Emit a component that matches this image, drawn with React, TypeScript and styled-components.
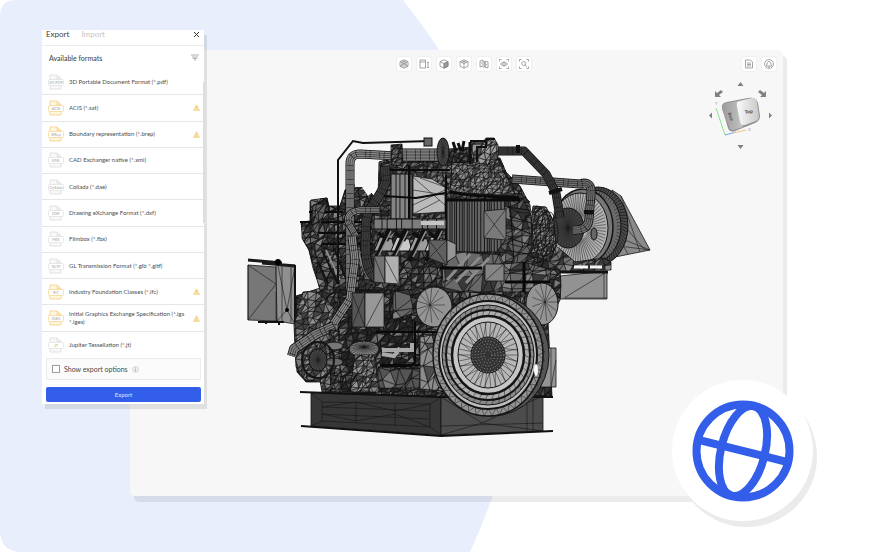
import React from "react";
import styled, { createGlobalStyle } from "styled-components";

const Global = createGlobalStyle`
  *, *::before, *::after { box-sizing: border-box; }
  body { margin: 0; background: #fff; font-family: Lato, "Noto Sans", sans-serif; color: #4a4a4a; }
  button, input { font: inherit; color: inherit; margin: 0; }
`;

/* ---------- layout ---------- */

const Page = styled.main`
  position: relative;
  display: flex;
  min-height: 100vh;
  padding: 50px 87px 56px 130px;
  overflow: hidden;
`;

const Backdrop = styled.svg`
  position: absolute;
  inset: 0 auto 0 0;
  height: 100%;
`;

const Viewer = styled.section`
  position: relative;
  flex: 1;
  display: flex;
  flex-direction: column;
  min-width: 0;
  background: #f7f7f7;
  border-radius: 5px;
  box-shadow: 4px 6px 0 rgba(0, 0, 0, 0.08);
`;

const Toolbar = styled.header`
  display: flex;
  padding: 6px 6px 0 21px;
`;

const ToolGroup = styled.div<{ $side?: boolean }>`
  display: flex;
  flex: ${(p) => (p.$side ? 1 : "none")};
  justify-content: flex-end;
  gap: 4px;
`;

const ToolButton = styled.button`
  display: grid;
  place-items: center;
  width: 16px;
  height: 16px;
  padding: 0;
  background: #fff;
  border: 1px solid #f0f0f0;
  border-radius: 3px;
`;

const Canvas = styled.div`
  flex: 1;
  display: flex;
  min-height: 0;
`;

const Scene = styled.svg`
  flex: 1;
  min-width: 0;
`;

const NavCube = styled.svg`
  position: absolute;
  top: 30px;
  right: 8px;
`;

const Badge = styled.div`
  position: absolute;
  right: 57px;
  bottom: 31px;
  display: grid;
  place-items: center;
  width: 141px;
  height: 141px;
  border-radius: 50%;
  background: #fff;
  box-shadow: 4px 6px 0 #ebebeb;
`;

/* ---------- export panel ---------- */

const Panel = styled.aside`
  position: absolute;
  top: 30px;
  left: 42px;
  width: 162px;
  background: #fff;
  box-shadow: 3px 5px 0 rgba(0, 0, 0, 0.09);
`;

const Tabs = styled.div`
  display: flex;
  align-items: flex-start;
  gap: 12px;
  height: 16px;
  padding: 0 4px;
  border-bottom: 1px solid #ececec;
`;

const Tab = styled.button<{ $active?: boolean }>`
  padding: 0;
  border: 0;
  background: none;
  font-size: 8px;
  line-height: 9px;
  color: ${(p) => (p.$active ? "#444" : "#c6c6c6")};
`;

const Close = styled.button`
  display: grid;
  margin-left: auto;
  padding: 1px 0;
  border: 0;
  background: none;
`;

const ListHead = styled.div`
  display: flex;
  align-items: center;
  justify-content: space-between;
  height: 23px;
  padding: 0 5px 0 7px;
`;

const Heading = styled.h2`
  margin: 0;
  font-size: 7px;
  line-height: 10px;
  font-weight: 500;
`;

const Formats = styled.ul`
  display: grid;
  grid-auto-rows: 1fr;
  min-height: 289px;
  margin: 0;
  padding: 0;
  list-style: none;
`;

const Format = styled.li`
  display: flex;
  align-items: center;
  gap: 4px;
  padding: 0 4px 0 6px;
  border-bottom: 1px solid #e6e6e6;
  &:last-child { border-bottom: 0; }
`;

const FormatName = styled.span`
  flex: 1;
  font-size: 6px;
  line-height: 8px;
  color: #4d4d4d;
`;

const ScrollThumb = styled.i`
  position: absolute;
  top: 52px;
  right: 0;
  width: 1px;
  height: 141px;
  background: #dcdcdc;
`;

const Options = styled.label`
  display: flex;
  align-items: center;
  gap: 4px;
  height: 22px;
  margin: 0 3px 0 4px;
  padding: 0 5px;
  border: 1px solid #ebebeb;
  background: #fbfbfb;
  font-size: 7px;
  line-height: 10px;
`;

const Tick = styled.input`
  appearance: none;
  width: 8px;
  height: 8px;
  border: 1px solid #9a9a9a;
  background: #fff;
`;

const ExportButton = styled.button`
  display: block;
  width: calc(100% - 7px);
  height: 15px;
  margin: 7px 3px 0 4px;
  padding: 0;
  border: 0;
  border-radius: 2px;
  background: #335eea;
  color: #dfe6ff;
  font-size: 6px;
  line-height: 14px;
`;

const PanelFoot = styled.div`
  height: 2px;
`;

/* ---------- small icons ---------- */

function FileIcon({ label, warm }: { label: string; warm?: boolean }) {
  const edge = warm ? "#f6d797" : "#e2e2e2";
  return (
    <svg width="17" height="16" viewBox="0 0 17 16" aria-hidden>
      <path d="M2 6V1h7l4 3.5V6M2 11v4h11v-4" fill={warm ? "#fff6df" : "#f8f8f8"} stroke={edge} />
      <path d="M9 1v4h4" fill={warm ? "#f9e2ae" : "#ececec"} stroke={edge} strokeWidth=".7" />
      <rect x=".5" y="5.5" width="15" height="6" rx="1" fill="#fff" stroke={edge} strokeWidth=".8" />
      <text x="8" y="10" textAnchor="middle" fontSize="4" fill="#a3a3a3">{label}</text>
    </svg>
  );
}

const Warning = () => (
  <svg width="7" height="7" viewBox="0 0 7 7" role="img" aria-label="Warning">
    <path d="M3.5.7 6.6 6.4H.4Z" fill="#fbe3ae" stroke="#f5d388" strokeWidth=".7" />
    <path d="M3.5 2.4v2M3.5 5v.7" stroke="#e3b558" strokeWidth=".6" />
  </svg>
);

const CUBE = "M5 .8 9 2.6V7.2L5 9.2 1 7.2V2.6ZM1 2.6 5 4.6 9 2.6M5 4.6V9.2";
const CORNERS = "M.5 2.5v-2h2M7.5.5h2v2M9.5 7.5v2h-2M2.5 9.5h-2v-2";

const tools: { name: string; art: React.ReactNode }[] = [
  { name: "Wireframe", art: <><path d={CUBE} /><path d="M1 7.2 5 4.6 9 7.2M3 1.7 7 3.6V8M3 8V3.6L7 1.7" /></> },
  { name: "Measure", art: <path d="M1 3h5.500v6H1ZM1 3V1h5.500v2M9 3.500v5M8 3.500h2M8 8.500h2" /> },
  { name: "Shaded", art: <><path d={CUBE} /><path d="M5 4.600 9 2.600V7.200L5 9.200Z" fill="#9a9a9a" /></> },
  { name: "View", art: <><path d={CUBE} /><path d="M3 1.700 7 3.600M7 1.700 3 3.600" /></> },
  { name: "Section", art: <path d="M1 2l3-1v6L1 8ZM4 3h2v5H4M6 2l3 1v6L6 8ZM2 4h1M7 5l1 1" /> },
  { name: "Show all", art: <><path d={CORNERS} /><circle cx="5" cy="5" r="1.300" /><path d="M1.500 5Q5 .8 8.500 5Q5 9.200 1.500 5Z" /></> },
  { name: "Zoom to fit", art: <><path d={CORNERS} /><circle cx="4.700" cy="4.500" r="2" /><path d="m6 6 2 2" /></> },
];

const Glyph = ({ children }: { children: React.ReactNode }) => (
  <svg width="10" height="10" viewBox="0 0 10 10" fill="none" stroke="#808080" strokeWidth=".7" aria-hidden>{children}</svg>
);

/* ---------- engine drawing ---------- */

type P = [number, number];

function random(seed: number) {
  let s = seed * 7919 + 17;
  return () => {
    s = (s * 1664525 + 1013904223) % 4294967296;
    return s / 4294967296;
  };
}

const toPoints = (p: P[]) => p.map((q) => q.join(",")).join(" ");

/* A filled outline covered by an irregular triangle mesh. */
function Mesh({ pts, fill, cell = 6, seed = 1, tones = 0.3, line = "#151515", w = 0.45 }: {
  pts: P[]; fill: string; cell?: number; seed?: number; tones?: number; line?: string; w?: number;
}) {
  const id = "mesh" + React.useId().replace(/[^a-zA-Z0-9]/g, "");
  const r = random(seed);
  const xs = pts.map((p) => p[0]);
  const ys = pts.map((p) => p[1]);
  const x0 = Math.min(...xs) - cell;
  const y0 = Math.min(...ys) - cell;
  const cols = Math.ceil((Math.max(...xs) - x0) / cell) + 2;
  const rows = Math.ceil((Math.max(...ys) - y0) / cell) + 2;
  const grid: P[][] = [];
  for (let j = 0; j < rows; j++) {
    grid.push([]);
    for (let i = 0; i < cols; i++) grid[j].push([x0 + (i + r() * 0.9) * cell, y0 + (j + r() * 0.9) * cell]);
  }
  let lines = "";
  let dark = "";
  let light = "";
  for (let j = 0; j < rows - 1; j++)
    for (let i = 0; i < cols - 1; i++) {
      const a = grid[j][i], b = grid[j][i + 1], c = grid[j + 1][i], d = grid[j + 1][i + 1];
      const t1 = `M${a}L${b}L${c}Z`;
      const t2 = `M${b}L${d}L${c}Z`;
      lines += t1 + t2;
      for (const t of [t1, t2]) {
        const v = r();
        if (v < tones) dark += t;
        else if (v > 1 - tones / 2) light += t;
      }
    }
  return (
    <g>
      <clipPath id={id}><polygon points={toPoints(pts)} /></clipPath>
      <polygon points={toPoints(pts)} fill={fill} stroke="#111" strokeWidth=".8" />
      <g clipPath={`url(#${id})`}>
        <path d={dark} fill="#000" opacity=".45" />
        <path d={light} fill="#bbb" opacity=".35" />
        <path d={lines} fill="none" stroke={line} strokeWidth={w} />
      </g>
    </g>
  );
}

/* Flat plate with a few edges drawn across it. */
const Plate = ({ pts, fill, edges = "" }: { pts: P[]; fill: string; edges?: string }) => (
  <g stroke="#151515" strokeWidth=".8" fill="none">
    <polygon points={toPoints(pts)} fill={fill} />
    <path d={edges} strokeWidth=".6" />
  </g>
);

function Spokes({ cx, cy, rx, ry, inner = 0, n = 36, skew = 0, w = 0.5 }: {
  cx: number; cy: number; rx: number; ry: number; inner?: number; n?: number; skew?: number; w?: number;
}) {
  let d = "";
  for (let i = 0; i < n; i++) {
    const a = (i / n) * Math.PI * 2;
    const b = a + skew;
    d += `M${cx + Math.cos(a) * rx * inner} ${cy + Math.sin(a) * ry * inner}L${cx + Math.cos(b) * rx} ${cy + Math.sin(b) * ry}`;
  }
  return <path d={d} stroke="#1a1a1a" strokeWidth={w} fill="none" />;
}

const Ring = ({ cx, cy, rx, ry, fill = "none", w = 1 }: {
  cx: number; cy: number; rx: number; ry: number; fill?: string; w?: number;
}) => <ellipse cx={cx} cy={cy} rx={rx} ry={ry} fill={fill} stroke="#141414" strokeWidth={w} />;

/* Tube shaded by nested strokes, so the facets run along its length. */
const Pipe = ({ d, w, tone }: { d: string; w: number; tone: string }) => (
  <g fill="none" strokeLinejoin="round">
    <path d={d} stroke="#0e0e0e" strokeWidth={w} />
    <path d={d} stroke={tone} strokeWidth={w - 1.6} />
    <path d={d} stroke="#1c1c1c" strokeWidth={w * 0.5} />
    <path d={d} stroke={tone} strokeWidth={w * 0.5 - 1} />
    <path d={d} stroke="#222" strokeWidth=".6" />
    <path d={d} stroke="#151515" strokeWidth={w - 2} strokeDasharray=".5 9 .5 4" />
  </g>
);

const Flutes = ({ x, y, w, h, step, fill }: { x: number; y: number; w: number; h: number; step: number; fill: string }) => {
  const r = random(x);
  let d = "";
  for (let i = step; i < w; i += step * (0.6 + r() * 0.8)) d += `M${x + i} ${y}v${h}`;
  return (
    <g>
      <rect x={x} y={y} width={w} height={h} fill={fill} stroke="#111" />
      <path d={d} stroke="#0f0f0f" strokeWidth=".9" />
    </g>
  );
};

function Engine() {
  return (
    <g>
      {/* side box on the left */}
      <Plate pts={[[248, 265], [276, 267], [277, 321], [248, 320]]} fill="#777" edges="M248 265 276 284 248 320M276 292V321M248 265V320" />
      <Plate pts={[[276, 265], [295, 265], [295, 324], [277, 321]]} fill="#8f8f8f" edges="M278 266 287 310 295 324M295 266 287 310 277 321M282 265V322M291 266V322" />
      <path d="M248 260 282 263M262 263 295 266" stroke="#1a1a1a" strokeWidth="3" />
      <path d="M295 265V324" stroke="#111" strokeWidth="2" />
      <path d="M258 322H284M266 321v3M279 321v4" stroke="#111" strokeWidth="2" />
      <circle cx="287" cy="310" r="2" /><circle cx="278" cy="262" r="3" />

      {/* charger, right */}
      <Plate pts={[[560, 276], [607, 271], [607, 299], [560, 299]]} fill="#929292" edges="M564 298 605 273M604 272V299M565 298H607" />
      <path d="M543 272H608" stroke="#111" strokeWidth="3" />
      <Plate pts={[[612, 190], [621, 196], [650, 250], [610, 258]]} fill="#8a8a8a" edges="M621 196 640 252M612 235 650 250M612 245 650 250M615 215 645 250M611 225 628 254" />
      <Ring cx={598} cy={226} rx={30} ry={39} fill="#4a4a4a" />
      <Spokes cx={598} cy={226} rx={30} ry={39} inner={0.78} n={70} skew={0.08} w={0.8} />
      <Ring cx={594} cy={226} rx={27} ry={36} fill="#6a6a6a" />
      <Spokes cx={594} cy={226} rx={27} ry={36} inner={0.85} n={60} />
      <Ring cx={583} cy={227} rx={30} ry={38} fill="#777" w={1.5} />
      <Ring cx={580} cy={228} rx={28} ry={35} fill="#b0b0b0" />
      <Spokes cx={578} cy={228} rx={28} ry={35} inner={0.35} n={64} w={0.5} />
      <Ring cx={594} cy={234} rx={3} ry={6} fill="#666" />
      <Ring cx={568} cy={228} rx={16} ry={20} fill="#404040" />
      <Spokes cx={568} cy={228} rx={16} ry={20} n={30} />
      <Mesh pts={[[547, 240], [560, 249], [575, 262], [604, 258], [611, 262], [611, 270], [545, 271]]} fill="#6f6f6f" cell={8} seed={4} />
      <path d="M574 267h14M590 267h12" stroke="#f5f5f5" strokeWidth="3" />
      <Mesh pts={[[533, 206], [546, 207], [554, 222], [556, 245], [550, 262], [538, 260], [529, 248]]} fill="#858585" cell={4} seed={7} />
      {[0, 4, 8, 12].map((i) => <Ring key={i} cx={537 + i} cy={233} rx={9} ry={27 - i / 2} w={0.8} />)}

      {/* main silhouette */}
      <Mesh
        pts={[[301, 222], [310, 221], [310, 201], [327, 198], [329, 206], [340, 206], [345, 190], [354, 185], [365, 187], [378, 200], [379, 162], [392, 158], [500, 158], [506, 172], [520, 186], [530, 205], [534, 250], [560, 270], [561, 285], [560, 300], [548, 322], [552, 396], [330, 396], [328, 382], [306, 382], [297, 372], [295, 340], [296, 296], [320, 288], [313, 268], [309, 250], [303, 240]]}
        fill="#565656" cell={6} seed={11} tones={0.4} w={0.6}
      />
      <Mesh pts={[[311, 200], [327, 198], [329, 212], [340, 206], [346, 190], [365, 187], [372, 214], [372, 290], [320, 290], [309, 250], [302, 238], [302, 223], [311, 221]]} fill="#666" cell={6} seed={5} tones={0.45} w={0.6} />
      <path d="M300 222H372M309 212h34M322 244h50M316 233h54" stroke="#0b0b0b" strokeWidth="2" />
      <path d="M322 250l16 34M334 248l14 36M360 246l12 36M318 262l10 22" stroke="#141414" strokeWidth="2" />
      <path d="M326 250l14 30M357 250l10 26" stroke="#8a8a8a" strokeWidth="2" />
      <Mesh pts={[[313, 205], [327, 201], [324, 214], [317, 236], [311, 228]]} fill="#5f5f5f" cell={7} seed={8} tones={0.2} />

      {/* head */}
      <path d="M355 162H377V188L368 196L362 187H355Z" fill="#f7f7f7" />
      <Mesh pts={[[380, 163], [500, 160], [505, 180], [530, 202], [400, 215], [380, 205]]} fill="#6c6c6c" cell={5} seed={12} tones={0.35} />
      <Flutes x={391} y={174} w={21} h={45} step={5} fill="#858585" />
      <Plate pts={[[413, 176], [432, 179], [445, 187], [445, 212], [413, 214]]} fill="#bababa" edges="M413 177 445 205M413 190 445 195M413 205 445 190M413 214 440 200M420 178 445 187" />
      <path d="M384 196 416 198 445 193" stroke="#0b0b0b" strokeWidth="2" fill="none" />
      <path d="M409 165V219M390 170H450M446 175V290" stroke="#0c0c0c" strokeWidth="2" />
      <Mesh pts={[[452, 162], [498, 160], [508, 180], [516, 196], [450, 192]]} fill="#8a8a8a" cell={4} seed={14} tones={0.25} w={0.4} />
      <Flutes x={374} y={219} w={72} h={10} step={8} fill="#7c7c7c" />
      <path d="M421 223H444" stroke="#c6c6c6" strokeWidth="4" />
      {/* injectors */}
      {[374, 391, 409, 425].map((x, i) => (
        <g key={x}>
          <path d={`M${x} 251 l6 -14 12 2 3 12Z`} fill={i % 2 ? "#c9c9c9" : "#9d9d9d"} stroke="#111" />
          <path d={`M${x + 4} 233l11 7M${x + 15} 229l-14 32`} stroke="#111" strokeWidth="4" />
          <path d={`M${x + 17} 231l-13 26`} stroke="#8f8f8f" strokeWidth="1.500" />
        </g>
      ))}

      {/* housing */}
      <Flutes x={447} y={200} w={58} h={52} step={3} fill="#666" />
      <Mesh pts={[[443, 251], [505, 255], [524, 262], [551, 270], [548, 292], [443, 292]]} fill="#686868" cell={11} seed={16} tones={0.3} />
      <Mesh pts={[[505, 197], [523, 199], [531, 215], [532, 245], [525, 262], [504, 264], [498, 250], [505, 240]]} fill="#606060" cell={9} seed={18} tones={0.3} />
      <path d="M507 207 529 210M509 216 531 223M509 225 531 234M508 238 531 245M504 250 528 254M510 200 514 262" stroke="#101010" />
      <Plate pts={[[484, 211], [506, 209], [506, 240], [484, 238]]} fill="#7a7a7a" edges="M484 211 506 240M484 238 506 209" />
      <path d="M450 192 470 195 519 198M447 200H520" stroke="#0b0b0b" strokeWidth="3" fill="none" />
      <Plate pts={[[429, 240], [447, 240], [447, 265], [429, 258]]} fill="#606060" edges="M429 240 447 265M429 258 447 240" />
      <Plate pts={[[447, 240], [456, 244], [456, 256], [447, 262]]} fill="#969696" />
      <Plate pts={[[485, 264], [504, 264], [504, 281], [485, 281]]} fill="#858585" edges="M485 281 504 264" />
      <path d="M447 280 470 254M456 282 480 257M466 283 489 258" stroke="#8b8b8b" strokeWidth="3" />
      <path d="M524 262V292M440 268H482M505 282H550" stroke="#090909" strokeWidth="3" />

      {/* top line */}
      <Pipe d="M350 292V164Q350 154 360 154L396 156" w={9} tone="#8a8a8a" />
      <Pipe d="M392 155H447" w={13} tone="#7c7c7c" />
      <Mesh pts={[[391, 145], [402, 144], [403, 166], [391, 165]]} fill="#666" cell={4} seed={21} />
      <Ring cx={443} cy={152} rx={6} ry={14} fill="#4c4c4c" />
      <Spokes cx={443} cy={152} rx={6} ry={14} n={20} />
      <Mesh pts={[[449, 149], [472, 147], [472, 162], [449, 163]]} fill="#505050" cell={4} seed={22} />
      <path d="M453 142 456 151M458 143 461 151M464 141 462 151M470 142V164" stroke="#111" strokeWidth="3" />
      <Mesh pts={[[471, 142], [484, 141], [486, 138], [494, 138], [498, 145], [498, 158], [490, 165], [474, 162]]} fill="#959595" cell={6} seed={23} tones={0.2} />
      <path d="M486 139H495M470 141H486V147H477V162" stroke="#111" strokeWidth="2" fill="none" />
      <path d="M338 284V160L353 141 363 143 430 141" stroke="#111" strokeWidth="2" fill="none" />
      <rect x="424" y="138" width="8" height="8" fill="#666" stroke="#111" />
      <Pipe d="M512 179 580 184Q592 180 591 194L589 219Q588 231 573 230" w={9} tone="#707070" />
      <Pipe d="M498 151H524L546 174 556 193 560 218" w={9} tone="#383838" />
      <path d="M518 145v8M549 193l13 -4M584 212h10" stroke="#111" strokeWidth="4" />
      <Pipe d="M385 166 386 181Q382 193 374 203 364 215 366 235 364 262 371 273L381 283" w={10} tone="#3c3c3c" />
      <Pipe d="M380 210H360Q346 212 348 222L356 236" w={7} tone="#8c8c8c" />

      {/* lower left machinery */}
      <Mesh pts={[[303, 292], [316, 291], [338, 312], [345, 345], [337, 392], [322, 392], [320, 380], [305, 380], [296, 367], [294, 325]]} fill="#7c7c7c" cell={6} seed={30} tones={0.3} />
      <Mesh pts={[[338, 290], [445, 290], [445, 392], [338, 392]]} fill="#484848" cell={6} seed={31} tones={0.5} w={0.7} />
      <Mesh pts={[[378, 367], [420, 369], [420, 388], [378, 388]]} fill="#555" cell={10} seed={32} tones={0.2} />
      <Mesh pts={[[420, 337], [432, 335], [441, 370], [444, 391], [420, 389]]} fill="#8c8c8c" cell={13} seed={33} tones={0.1} />
      <Mesh pts={[[393, 292], [409, 289], [414, 313], [393, 320]]} fill="#666" cell={12} seed={34} tones={0.1} />
      <path d="M382 350H412V343M382 354 394 356 400 348" stroke="#a9a9a9" strokeWidth="4" fill="none" />
      <path d="M380 365H420M376 332H445M415 322V362L410 366H380" stroke="#0a0a0a" strokeWidth="2" fill="none" />
      <Pipe d="M352 236 355 260 350 299 334 323 333 346" w={9} tone="#8c8c8c" />
      <Pipe d="M334 326 316 334 294 349 292 356" w={10} tone="#7e7e7e" />
      <Mesh pts={[[329, 330], [339, 330], [341, 398], [331, 398]]} fill="#6a6a6a" cell={4} seed={35} />
      <Ring cx={334} cy={346} rx={9} ry={4} fill="#777" /><Ring cx={334} cy={362} rx={9} ry={4} fill="#6a6a6a" />
      <Ring cx={318} cy={360} rx={16} ry={18} w={2} /><Ring cx={318} cy={360} rx={9} ry={11} fill="#444" />
      <Spokes cx={318} cy={360} rx={16} ry={18} n={18} />
      <Ring cx={364} cy={349} rx={15} ry={8} fill="#8a8a8a" /><Spokes cx={364} cy={347} rx={15} ry={10} n={28} w={0.6} />
      <Mesh pts={[[355, 355], [374, 355], [380, 392], [350, 392]]} fill="#858585" cell={5} seed={36} tones={0.4} />
      <Plate pts={[[352, 293], [365, 293], [365, 327], [352, 327]]} fill="#555" edges="M352 293 365 327M352 327 365 293" />
      <Plate pts={[[365, 293], [384, 293], [384, 327], [365, 327]]} fill="#989898" edges="M366 327 384 293" />
      <Plate pts={[[374, 256], [385, 256], [385, 283], [374, 282]]} fill="#737373" edges="M374 256 385 283" />
      <Plate pts={[[385, 256], [399, 256], [399, 284], [385, 283]]} fill="#b0b0b0" edges="M385 258 398 283" />

      {/* base frame */}
      <Plate pts={[[311, 393], [441, 397], [441, 435], [311, 426]]} fill="#363636" edges="M311 393 322 402V421L311 426M441 397 430 404V427L441 435M322 402 430 404M322 407 430 411M322 414 430 419M322 421 430 427M356 402V423M395 403V426M322 407 356 402 395 411 430 404M322 414 356 421 395 414 430 427" />
      <Plate pts={[[441, 397], [543, 396], [543, 431], [441, 435]]} fill="#4c4c4c" edges="M441 397 482 423 543 396M482 423 441 435M482 423 543 431M441 426 543 423M527 397V431M533 397V431" />
      <path d="M300 392 441 397 553 397M301 426 441 436 553 431" stroke="#111" strokeWidth="2" fill="none" />

      {/* flywheel */}
      <Plate pts={[[538, 348], [556, 348], [556, 387], [538, 387]]} fill="#949494" edges="M551 348V387M551 387 556 360" />
      <Ring cx={434} cy={307} rx={18} ry={20} fill="#949494" /><Spokes cx={430} cy={305} rx={15} ry={18} n={13} />
      <Ring cx={542} cy={304} rx={16} ry={21} fill="#949494" /><Spokes cx={545} cy={302} rx={13} ry={19} n={13} />
      <Ring cx={492} cy={355} rx={57} ry={61} fill="#555" />
      <Ring cx={488} cy={355} rx={55} ry={61} fill="#939393" w={1.500} />
      <Spokes cx={489} cy={355} rx={56} ry={61} inner={0.88} n={44} skew={0.09} w={0.5} />
      <Spokes cx={489} cy={355} rx={56} ry={61} inner={0.88} n={44} skew={-0.05} w={0.5} />
      <Ring cx={488} cy={355} rx={49} ry={54} fill="#bdbdbd" w={2} />
      <Ring cx={488} cy={355} rx={46} ry={50} fill="#8a8a8a" />
      <Spokes cx={488} cy={355} rx={46} ry={50} inner={0.9} n={44} skew={0.06} />
      <Ring cx={488} cy={355} rx={42} ry={45} fill="#adadad" w={2} />
      <Spokes cx={488} cy={355} rx={42} ry={45} inner={0.86} n={40} skew={0.06} />
      <Ring cx={488} cy={355} rx={36} ry={39} fill="#c6c6c6" w={2.500} />
      <Ring cx={488} cy={355} rx={30} ry={33} fill="#b6b6b6" />
      <Spokes cx={488} cy={355} rx={30} ry={33} inner={0.55} n={34} />
      <Spokes cx={488} cy={355} rx={30} ry={33} inner={0.55} n={17} skew={0.22} />
      <Ring cx={488} cy={355} rx={17} ry={18} fill="#333" />
      {[16, 13, 10, 7, 4].map((k) => (
        <ellipse key={k} cx="488" cy="355" rx={k} ry={k + 1} fill="none" stroke="#9a9a9a" strokeWidth="1" strokeDasharray="1 2" />
      ))}
      <ellipse cx="536" cy="370" rx="2" ry="6" fill="#fafafa" />
    </g>
  );
}

/* ---------- data ---------- */

const formats: { icon: string; name: string; warn?: boolean }[] = [
  { icon: "3D PDF", name: "3D Portable Document Format (*.pdf)" },
  { icon: "ACIS", name: "ACIS (*.sat)", warn: true },
  { icon: "BRep", name: "Boundary representation (*.brep)", warn: true },
  { icon: "XML", name: "CAD Exchanger native (*.xml)" },
  { icon: "Collada", name: "Collada (*.dae)" },
  { icon: "DXF", name: "Drawing eXchange Format (*.dxf)" },
  { icon: "FBX", name: "Filmbox (*.fbx)" },
  { icon: "GLTF", name: "GL Transmission Format (*.glb *.gltf)" },
  { icon: "IFC", name: "Industry Foundation Classes (*.ifc)", warn: true },
  { icon: "IGES", name: "Initial Graphics Exchange Specification (*.igs *.iges)", warn: true },
  { icon: "JT", name: "Jupiter Tessellation (*.jt)" },
];

export default function App() {
  return (
    <Page>
      <Global />
      <Backdrop viewBox="0 0 540 552" aria-hidden>
        <path d="M16 0H403C542 174 554 370 470 552H22Q0 552 0 530V16Q0 0 16 0Z" fill="#e8eefc" />
      </Backdrop>

      <Viewer>
        <Toolbar>
          <ToolGroup $side />
          <ToolGroup>
            {tools.map((t) => (
              <ToolButton key={t.name} aria-label={t.name}><Glyph>{t.art}</Glyph></ToolButton>
            ))}
          </ToolGroup>
          <ToolGroup $side>
            <ToolButton aria-label="Notes"><Glyph><path d="M1.500 1h5l2 2v6h-7ZM3 4h4M3 5.500h4M3 7h4" /></Glyph></ToolButton>
            <ToolButton aria-label="Account"><Glyph><circle cx="5" cy="5" r="4.400" /><path d="M2.500 7Q3.200 2.200 5 2.200T7.500 7ZM4 8h2" /></Glyph></ToolButton>
          </ToolGroup>
        </Toolbar>
        <Canvas>
          <Scene viewBox="130 72 653 424" role="img" aria-label="Engine model"><Engine /></Scene>
        </Canvas>
        <NavCube width="70" height="70" viewBox="705 80 70 70" role="img" aria-label="View cube">
          <defs>
            <linearGradient id="cubeSide" x1="0" x2="1"><stop offset="0" stopColor="#9b9b9b" /><stop offset="1" stopColor="#c4c4c4" /></linearGradient>
            <linearGradient id="cubeTop" x1="0" x2="1"><stop offset="0" stopColor="#fafafa" /><stop offset="1" stopColor="#c8c8c8" /></linearGradient>
          </defs>
          <g fill="#808080">
            <path d="M740.500 82 743.500 86H737.500ZM740.500 149 743.500 145H737.500ZM709 115.500 712 112.500V118.500ZM772 115.500 769 112.500V118.500Z" />
            <path d="M715 97V91L717 93 721 90 723 92 719 95 721 97ZM766 97V91L764 93 760 90 758 92 762 95 760 97Z" />
          </g>
          <path d="M716 108 725 135" stroke="#8be58b" /><path d="M725 135 736 132" stroke="#7d9cf0" /><path d="M733 133 746 130" stroke="#f2c48a" />
          <path d="M727 102 748 98Q756 97 758 103L760 116Q760 121 755 123L735 131Q730 133 728 128L722 108Q721 103 727 102Z" fill="#8d8d8d" />
          <path d="M726 103 738 101 743 127 734 130Q730 131 729 127L722 109Q721 104 726 103Z" fill="url(#cubeSide)" />
          <path d="M739 101 752 98Q756 98 757 102L759 116Q759 120 756 121L745 125Q741 126 740 122L737 106Q736 102 739 101Z" fill="url(#cubeTop)" />
          <text x="745" y="114" fontSize="5" fontWeight="700" fill="#444" transform="rotate(-9 745 114)">Top</text>
          <text x="728" y="113" fontSize="4" fontWeight="700" fill="#444" transform="rotate(72 728 113)">Back</text>
          <text x="715" y="105" fontSize="4" fill="#999">Y</text><text x="748" y="131" fontSize="4" fill="#999">X</text>
        </NavCube>
      </Viewer>

      <Panel>
        <Tabs role="tablist">
          <Tab role="tab" aria-selected $active>Export</Tab>
          <Tab role="tab" aria-selected={false}>Import</Tab>
          <Close aria-label="Close">
            <svg width="7" height="7" viewBox="0 0 7 7"><path d="m1 1 5 5M6 1 1 6" stroke="#333" /></svg>
          </Close>
        </Tabs>
        <ListHead>
          <Heading>Available formats</Heading>
          <svg width="8" height="7" viewBox="0 0 8 7" aria-hidden><path d="M0 1H8M1 3H7M2 4.500H6M3 6H5" stroke="#b0b0b0" /></svg>
        </ListHead>
        <Formats>
          {formats.map((f) => (
            <Format key={f.name}>
              <FileIcon label={f.icon} warm={f.warn} />
              <FormatName>{f.name}</FormatName>
              {f.warn && <Warning />}
            </Format>
          ))}
        </Formats>
        <Options>
          <Tick type="checkbox" />
          Show export options
          <svg width="7" height="7" viewBox="0 0 7 7" aria-hidden><circle cx="3.500" cy="3.500" r="3" fill="#eee" stroke="#ccc" strokeWidth=".6" /><path d="M3.500 1.500v.8M3.500 3v2.500" stroke="#999" strokeWidth=".7" /></svg>
        </Options>
        <ExportButton>Export</ExportButton>
        <PanelFoot />
        <ScrollThumb />
      </Panel>

      <Badge>
        <svg width="102" height="102" viewBox="-51 -51 102 102" fill="none" stroke="#335eea" strokeWidth="8" role="img" aria-label="Web">
          <circle r="46.500" />
          <g transform="rotate(14)"><ellipse rx="22" ry="46" /><path d="M-46 0H46" /></g>
        </svg>
      </Badge>
    </Page>
  );
}
